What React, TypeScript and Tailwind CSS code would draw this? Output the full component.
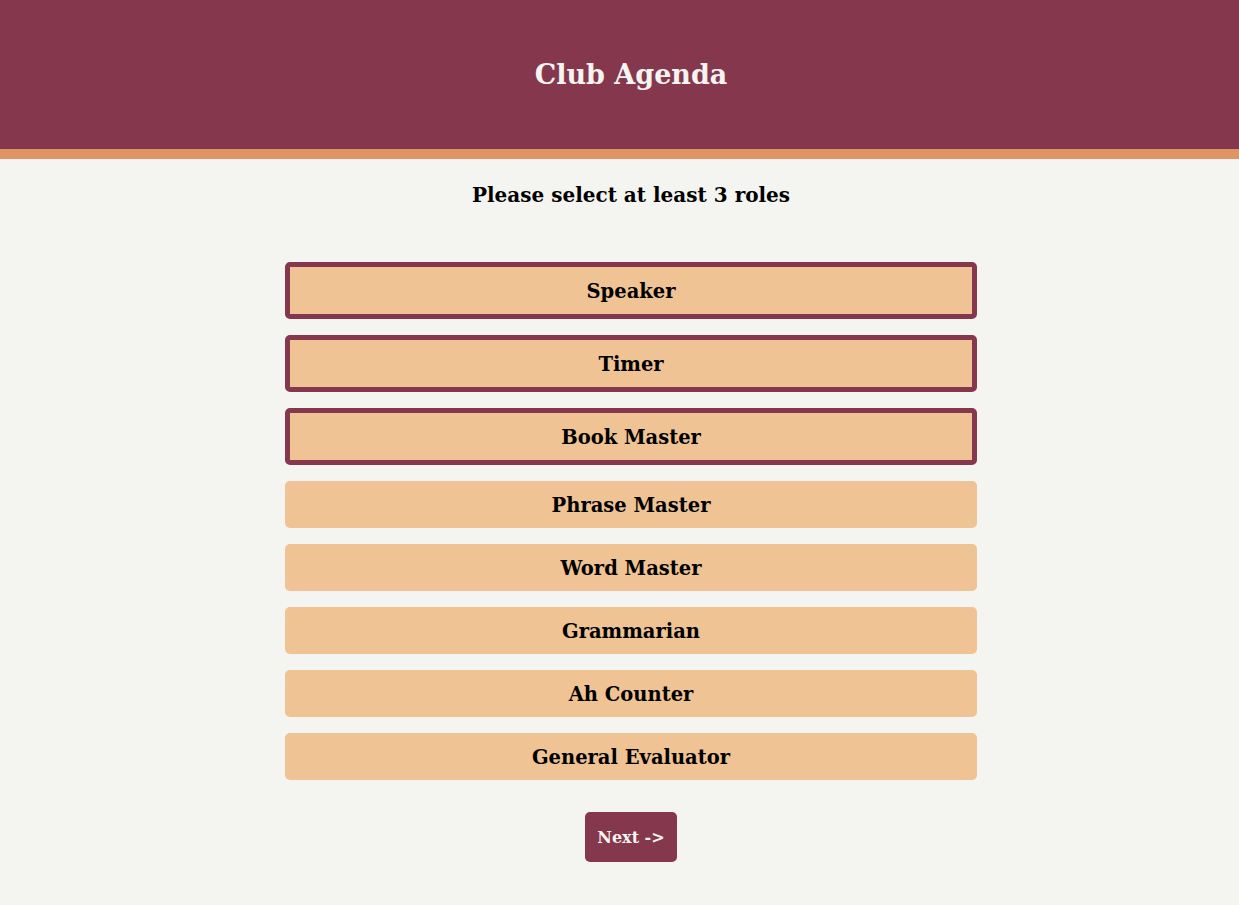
import { useState } from "react";

const ROLES = [
  "Speaker",
  "Timer",
  "Book Master",
  "Phrase Master",
  "Word Master",
  "Grammarian",
  "Ah Counter",
  "General Evaluator",
];

export default function App() {
  const [selected, setSelected] = useState<string[]>(["Speaker", "Timer", "Book Master"]);

  const toggle = (role: string) => {
    setSelected((prev) => (prev.includes(role) ? prev.filter((r) => r !== role) : [...prev, role]));
  };

  return (
    <div
      className="min-h-screen bg-[#F4F4F0] text-black"
      style={{ fontFamily: '"DejaVu Serif", "Liberation Serif", serif' }}
    >
      <header className="h-[159px] bg-[#84374D] border-b-[10px] border-[#DF9466] flex items-center justify-center pl-[23px] pt-[2px]">
        <h1 className="text-[27px] font-bold text-[#F4F4F0]">Club Agenda</h1>
      </header>

      <main className="flex flex-col items-center pl-[23px] pb-10">
        <h2 className="mt-[21px] text-[20px] font-bold leading-[30px]">Please select at least 3 roles</h2>

        <div className="mt-[52px] w-[692px] flex flex-col gap-4">
          {ROLES.map((role) => {
            const isOn = selected.includes(role);
            return (
              <button
                key={role}
                onClick={() => toggle(role)}
                className={
                  isOn
                    ? "h-[57px] pt-[2px] rounded-[5px] bg-[#EFC393] border-[5px] border-[#84374D] text-[19.5px] font-bold"
                    : "h-[47px] pt-[2px] rounded-[5px] bg-[#EFC393] text-[19.5px] font-bold"
                }
              >
                {role}
              </button>
            );
          })}
        </div>

        <button className="mt-8 w-[92px] h-[50px] rounded-[5px] bg-[#84374D] text-[#F4F4F0] text-[16px] font-bold pt-[2px]">
          Next -&gt;
        </button>
      </main>
    </div>
  );
}
